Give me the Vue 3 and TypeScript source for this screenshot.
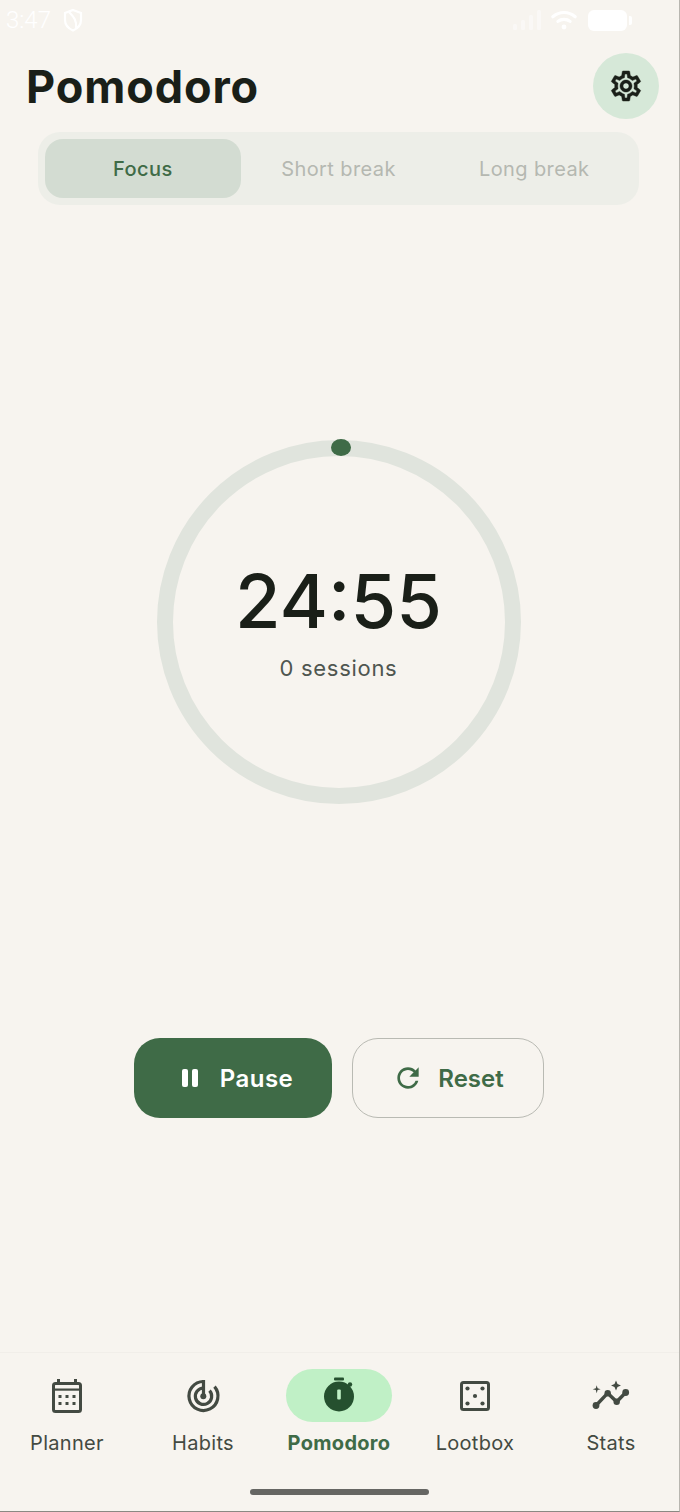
<script setup lang="ts">
import { ref } from 'vue'

const tabs = ['Focus', 'Short break', 'Long break']
const activeTab = ref('Focus')
const activeNav = ref('Pomodoro')
const navItems = ['Planner', 'Habits', 'Pomodoro', 'Lootbox', 'Stats']
</script>

<template>
  <div class="screen">
    <div class="status">
      <span class="time">3:47</span>
      <svg class="shield" width="22" height="24" viewBox="0 0 22 24" fill="none" stroke="#fff" stroke-width="2.2">
        <path d="M11 2 L19 5 V12 C19 17 15.5 20.5 11 22.5 C6.5 20.5 3 17 3 12 V5 Z" />
        <path d="M7 4 C12 9 15 13 14 20" />
      </svg>
      <span class="grow"></span>
      <svg width="30" height="22" viewBox="0 0 30 22" fill="#fff" opacity="0.45">
        <rect x="1" y="15" width="4" height="6" rx="1.5" />
        <rect x="9" y="11" width="4" height="10" rx="1.5" />
        <rect x="17" y="6" width="4" height="15" rx="1.5" />
        <rect x="25" y="1" width="4" height="20" rx="1.5" />
      </svg>
      <svg class="wifi" width="28" height="22" viewBox="0 0 30 22" fill="none" stroke="#fff" stroke-width="3.4" stroke-linecap="round">
        <path d="M3 7.5 C10 1.5 20 1.5 27 7.5" />
        <path d="M8.5 12.5 C12 9.5 18 9.5 21.5 12.5" />
        <circle cx="15" cy="18.5" r="2.6" fill="#fff" stroke="none" />
      </svg>
      <div class="battery"></div>
      <div class="battery-tip"></div>
    </div>

    <header class="top">
      <h1>Pomodoro</h1>
      <button class="gear">
        <svg width="36" height="36" viewBox="0 0 24 24" fill="#1a1f18" stroke="#1a1f18" stroke-width="0.3">
          <path d="M19.43 12.98c.04-.32.07-.64.07-.98 0-.34-.03-.66-.07-.98l2.11-1.65c.19-.15.24-.42.12-.64l-2-3.46c-.09-.16-.26-.25-.44-.25-.06 0-.12.01-.17.03l-2.49 1c-.52-.4-1.08-.73-1.69-.98l-.38-2.65C14.46 2.18 14.25 2 14 2h-4c-.25 0-.46.18-.49.42l-.38 2.65c-.61.25-1.17.59-1.69.98l-2.49-1c-.06-.02-.12-.03-.18-.03-.17 0-.34.09-.43.25l-2 3.46c-.13.22-.07.49.12.64l2.11 1.65c-.04.32-.07.65-.07.98 0 .33.03.66.07.98l-2.11 1.65c-.19.15-.24.42-.12.64l2 3.46c.09.16.26.25.44.25.06 0 .12-.01.17-.03l2.49-1c.52.4 1.08.73 1.69.98l.38 2.65c.03.24.24.42.49.42h4c.25 0 .46-.18.49-.42l.38-2.65c.61-.25 1.17-.59 1.69-.98l2.49 1c.06.02.12.03.18.03.17 0 .34-.09.43-.25l2-3.46c.12-.22.07-.49-.12-.64l-2.11-1.65zm-1.98-1.71c.04.31.05.52.05.73 0 .21-.02.43-.05.73l-.14 1.13.89.7 1.08.84-.7 1.21-1.27-.51-1.04-.42-.9.68c-.43.32-.84.56-1.25.73l-1.06.43-.16 1.13-.2 1.35h-1.4l-.19-1.35-.16-1.13-1.06-.43c-.43-.18-.83-.41-1.23-.71l-.91-.7-1.06.43-1.27.51-.7-1.21 1.08-.84.89-.7-.14-1.13c-.03-.31-.05-.54-.05-.74s.02-.43.05-.73l.14-1.13-.89-.7-1.08-.84.7-1.21 1.27.51 1.04.42.9-.68c.43-.32.84-.56 1.25-.73l1.06-.43.16-1.13.2-1.35h1.39l.19 1.35.16 1.13 1.06.43c.43.18.83.41 1.23.71l.91.7 1.06-.43 1.27-.51.7 1.21-1.07.85-.89.7.14 1.13zM12 8c-2.21 0-4 1.79-4 4s1.79 4 4 4 4-1.79 4-4-1.79-4-4-4zm0 6c-1.1 0-2-.9-2-2s.9-2 2-2 2 .9 2 2-.9 2-2 2z" />
        </svg>
      </button>
    </header>

    <div class="tabs">
      <div v-for="t in tabs" :key="t" class="tab" :class="{ on: t === activeTab }">{{ t }}</div>
    </div>

    <div class="timer-area">
      <div class="ring">
        <span class="dot"></span>
        <div class="clock">24:55</div>
        <div class="sessions">0 sessions</div>
      </div>
    </div>

    <div class="actions">
      <button class="btn pause">
        <svg width="20" height="20" viewBox="0 0 20 20" fill="#fff">
          <rect x="2" y="1" width="6" height="18" rx="2" />
          <rect x="12" y="1" width="6" height="18" rx="2" />
        </svg>
        Pause
      </button>
      <button class="btn reset">
        <svg width="32" height="32" viewBox="0 0 24 24" fill="#3f6b47">
          <path d="M17.65 6.35C16.2 4.9 14.21 4 12 4c-4.42 0-7.99 3.58-7.99 8s3.57 8 7.99 8c3.73 0 6.84-2.55 7.73-6h-2.08c-.82 2.33-3.04 4-5.65 4-3.31 0-6-2.69-6-6s2.69-6 6-6c1.66 0 3.14.69 4.22 1.78L13 11h7V4l-2.35 2.35z" />
        </svg>
        Reset
      </button>
    </div>

    <nav class="nav">
      <div v-for="n in navItems" :key="n" class="nav-item" :class="{ on: n === activeNav }">
        <div class="nav-icon">
          <svg v-if="n === 'Planner'" width="36" height="36" viewBox="0 0 36 36" fill="none">
            <rect x="4.5" y="5.5" width="27" height="28" rx="2" stroke="#434a42" stroke-width="3" />
            <rect x="4.5" y="10.5" width="27" height="2.2" fill="#434a42" />
            <rect x="8" y="1" width="3" height="5" fill="#434a42" />
            <rect x="25" y="1" width="3" height="5" fill="#434a42" />
            <g fill="#434a42">
              <rect x="9.5" y="17" width="3" height="3" /><rect x="16.5" y="17" width="3" height="3" /><rect x="23.5" y="17" width="3" height="3" />
              <rect x="9.5" y="24" width="3" height="3" /><rect x="16.5" y="24" width="3" height="3" /><rect x="23.5" y="24" width="3" height="3" />
            </g>
          </svg>
          <svg v-else-if="n === 'Habits'" width="36" height="36" viewBox="0 0 36 36" fill="none" stroke="#434a42" stroke-width="3.2">
            <path d="M18.5 3.5 A14.5 14.5 0 1 0 29.5 8.6" />
            <path d="M18.5 10 A8.2 8.2 0 1 0 24.5 12.6" />
            <path d="M18.5 2 V18" />
            <circle cx="18.3" cy="18.3" r="3" fill="#434a42" stroke="none" />
          </svg>
          <svg v-else-if="n === 'Pomodoro'" width="36" height="38" viewBox="0 0 36 38">
            <rect x="13" y="0.5" width="10" height="3" rx="1" fill="#25502f" />
            <circle cx="18" cy="19.5" r="15" fill="#25502f" />
            <circle cx="29" cy="7.5" r="2.2" fill="#25502f" />
            <rect x="16.2" y="12.5" width="3.6" height="10" rx="1" fill="#c0f0c6" />
          </svg>
          <svg v-else-if="n === 'Lootbox'" width="36" height="36" viewBox="0 0 36 36" fill="none">
            <rect x="4.5" y="4.5" width="27" height="27" rx="2" stroke="#434a42" stroke-width="3" />
            <g fill="#434a42">
              <circle cx="10.5" cy="10.5" r="2.1" /><circle cx="25.5" cy="10.5" r="2.1" /><circle cx="18" cy="18" r="2.1" />
              <circle cx="10.5" cy="25.5" r="2.1" /><circle cx="25.5" cy="25.5" r="2.1" />
            </g>
          </svg>
          <svg v-else width="38" height="36" viewBox="0 0 38 36" fill="none">
            <path d="M4 27.5 L15.7 15.2 L24.7 23.8 L33.7 14.5" stroke="#434a42" stroke-width="3.4" />
            <g fill="#434a42">
              <circle cx="4" cy="27.5" r="3.4" /><circle cx="15.7" cy="15.2" r="3.2" /><circle cx="24.7" cy="23.8" r="3.2" /><circle cx="33.7" cy="14.5" r="3.4" />
              <path d="M24 2.5 l1.5 3.5 l3.5 1.5 l-3.5 1.5 l-1.5 3.5 l-1.5 -3.5 l-3.5 -1.5 l3.5 -1.5 z" />
              <path d="M4.7 7.2 l.9 3.1 l3.1 .9 l-3.1 .9 l-.9 3.1 l-.9 -3.1 l-3.1 -.9 l3.1 -.9 z" />
            </g>
          </svg>
        </div>
        <span class="nav-label">{{ n }}</span>
      </div>
    </nav>

    <div class="home"></div>
  </div>
</template>

<style>
html, body { margin: 0; background: #f7f4ef; }
</style>

<style scoped>
.screen {
  width: 680px;
  height: 1512px;
  box-sizing: border-box;
  background: #f7f4ef;
  display: flex;
  flex-direction: column;
  font-family: "Inter", "Noto Sans", sans-serif;
  border-bottom: 1px solid #8b8983;
  border-right: 1px solid #b8b6b0;
  overflow: hidden;
}

.status {
  height: 40px;
  flex: none;
  display: flex;
  align-items: center;
  padding: 0 47px 0 6px;
  color: #fff;
}
.time { font-size: 24px; font-family: "Roboto", sans-serif; font-weight: 300; }
.shield { margin-left: 11px; }
.grow { flex: 1; }
.wifi { margin-left: 8px; }
.battery { width: 39px; height: 21px; background: #fff; border-radius: 6px; margin-left: 10px; }
.battery-tip { width: 3px; height: 9px; background: #fff; border-radius: 0 2px 2px 0; margin-left: 2px; }

.top {
  height: 92px;
  flex: none;
  display: flex;
  align-items: center;
  justify-content: space-between;
  padding: 0 20px 0 26px;
}
h1 {
  margin: 0;
  font-size: 45px;
  font-weight: 700;
  color: #1a1f18;
  letter-spacing: 0.9px;
}
.gear {
  width: 66px;
  height: 66px;
  border: 0;
  padding: 0;
  border-radius: 50%;
  background: #d6e8d8;
  display: flex;
  align-items: center;
  justify-content: center;
}

.tabs {
  width: 601px;
  height: 73px;
  flex: none;
  box-sizing: border-box;
  margin-left: 38px;
  padding: 7px;
  display: flex;
  background: #edeee8;
  border-radius: 22px;
}
.tab {
  flex: 1;
  display: flex;
  align-items: center;
  justify-content: center;
  font-size: 20px;
  color: #b5b8b1;
  letter-spacing: 0.4px;
  border-radius: 18px;
}
.tab.on {
  background: #d3dcd2;
  color: #3f6b47;
  font-weight: 500;
}

.timer-area {
  height: 833px;
  flex: none;
  display: flex;
  justify-content: center;
  align-items: flex-start;
  padding-top: 235px;
  box-sizing: border-box;
}
.ring {
  width: 364px;
  height: 364px;
  box-sizing: border-box;
  border: 16px solid #e0e4dd;
  border-radius: 50%;
  position: relative;
  display: flex;
  flex-direction: column;
  align-items: center;
  color: #1a1f18;
  margin-right: 2px;
}
.dot {
  position: absolute;
  top: -17px;
  left: 158px;
  width: 20px;
  height: 17px;
  background: #3f6b47;
  border-radius: 50%;
}
.clock {
  margin-top: 108px;
  font-size: 74px;
  line-height: 74px;
  font-weight: 500;
}
.sessions {
  margin-top: 17px;
  font-size: 22px;
  color: #4f5650;
  letter-spacing: 0.7px;
}

.actions {
  flex: none;
  margin-left: 134px;
  display: flex;
  gap: 20px;
}
.btn {
  height: 80px;
  box-sizing: border-box;
  border-radius: 26px;
  display: flex;
  align-items: center;
  justify-content: center;
  font-family: inherit;
  font-size: 24px;
  font-weight: 600;
}
.pause {
  width: 198px;
  gap: 20px;
  padding: 0 0 0 7px;
  background: #3f6b47;
  color: #fff;
  border: 0;
  letter-spacing: 0.5px;
}
.reset {
  width: 192px;
  gap: 14px;
  background: transparent;
  color: #3f6b47;
  border: 1.5px solid #b9bab3;
}

.nav {
  margin-top: auto;
  margin-left: -1px;
  display: flex;
  height: 108px;
  flex: none;
  padding-top: 16px;
  box-sizing: border-box;
  border-top: 1px solid #f1eee9;
}
.nav-item {
  width: 136px;
  display: flex;
  flex-direction: column;
  align-items: center;
}
.nav-icon {
  width: 106px;
  height: 53px;
  border-radius: 27px;
  display: flex;
  align-items: center;
  justify-content: center;
}
.nav-item.on .nav-icon { background: #c0f0c6; }
.nav-label {
  margin-top: 9px;
  font-size: 20px;
  color: #434a42;
  letter-spacing: 0.3px;
}
.nav-item.on .nav-label { color: #3f6b47; font-weight: 700; }

.home {
  flex: none;
  width: 179px;
  height: 6px;
  margin: 29px 0 16px 250px;
  border-radius: 3px;
  background: #666663;
}
</style>
